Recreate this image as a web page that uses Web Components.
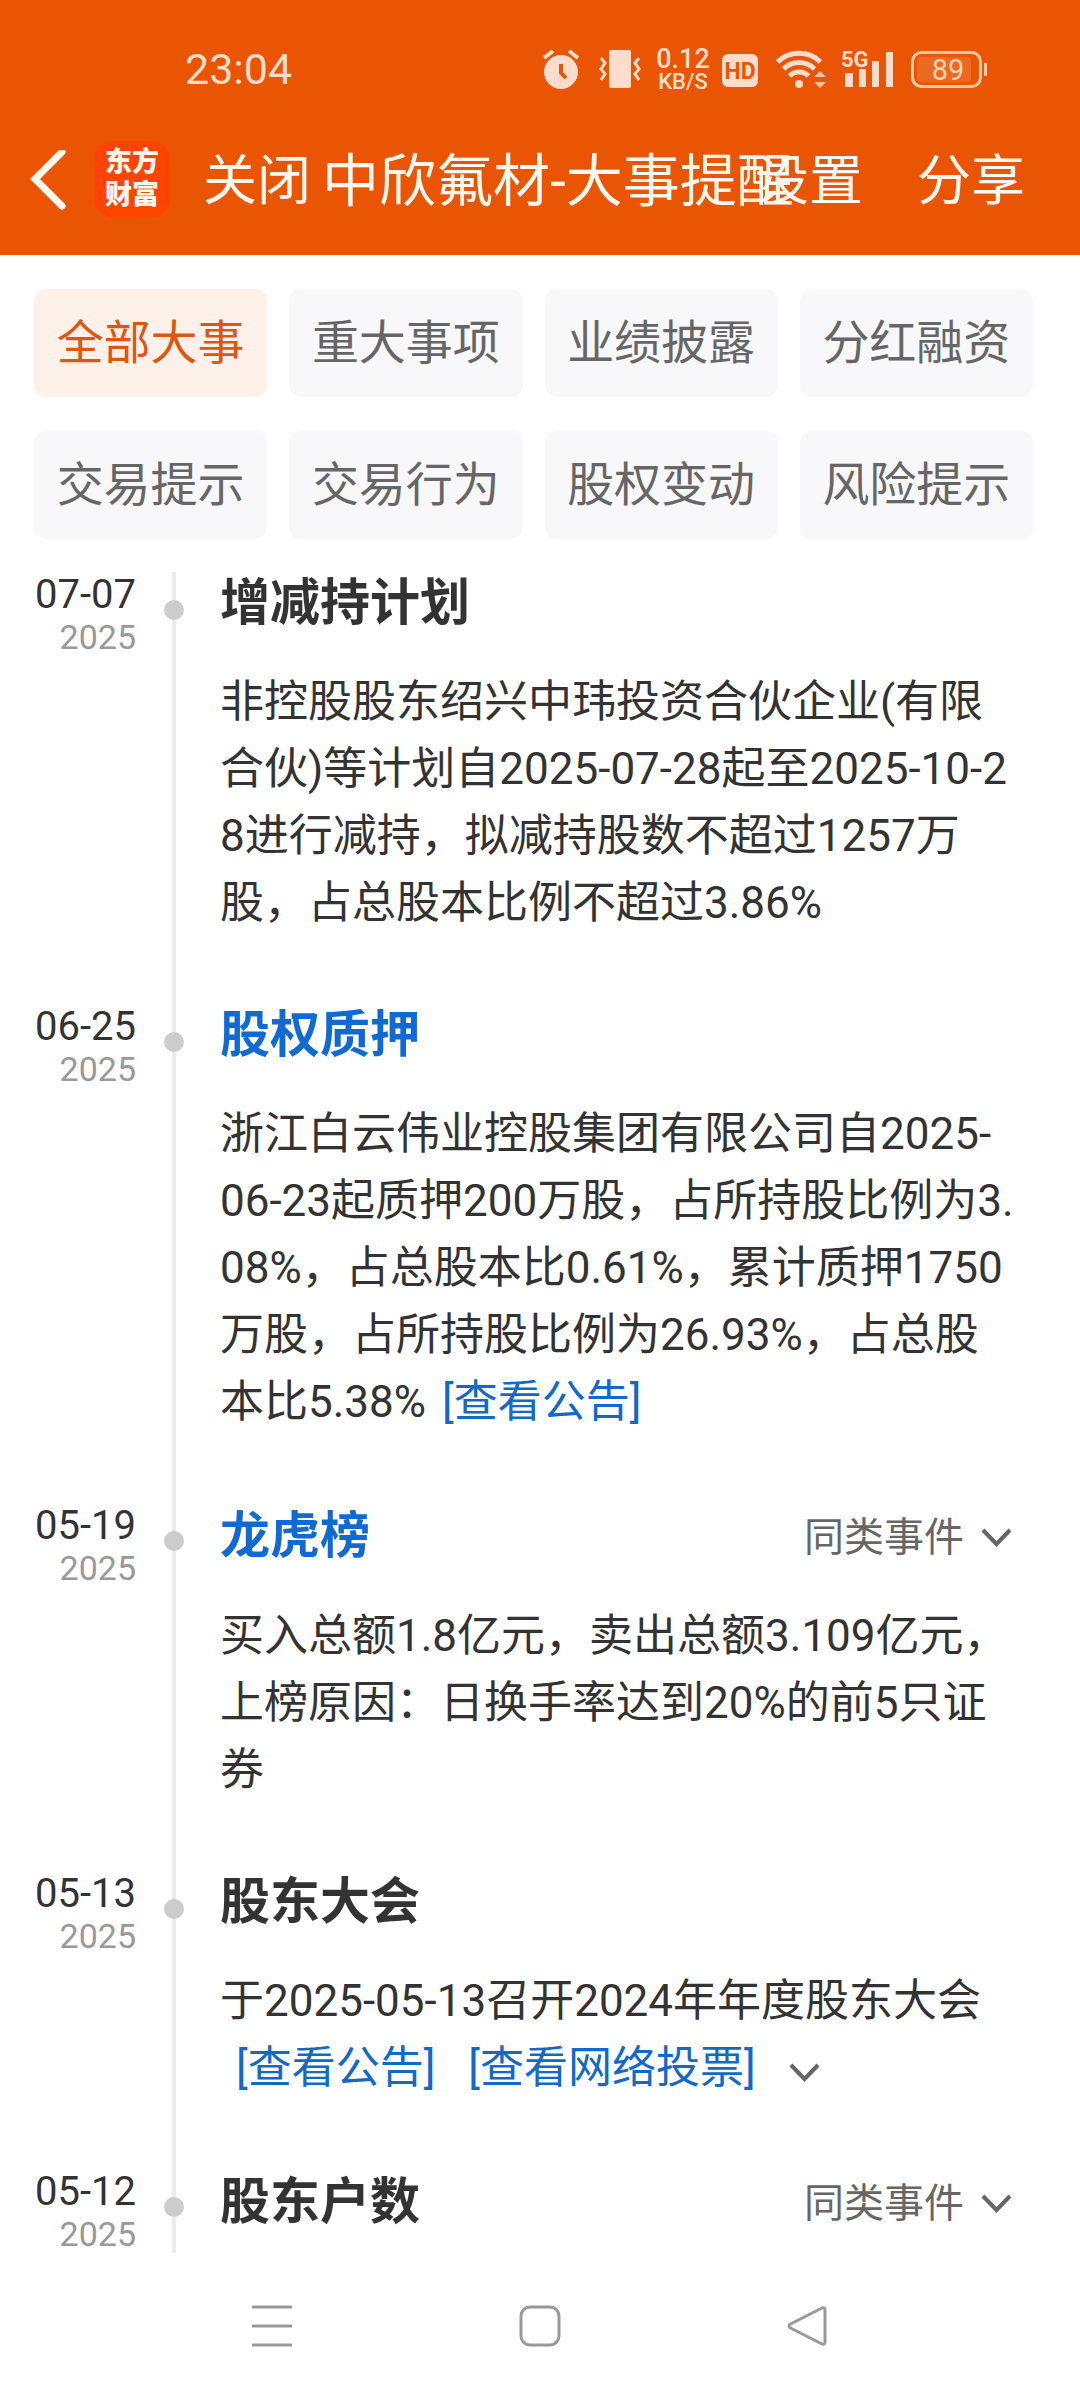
<!DOCTYPE html>
<html lang="zh-CN">
<head>
<meta charset="utf-8">
<meta name="viewport" content="width=device-width, initial-scale=1">
<title>中欣氟材-大事提醒</title>
<style>
  body { margin: 0; background: #fff; font-family: Roboto, "Noto Sans CJK SC", sans-serif; color: #333; }
</style>
</head>
<body>
<event-app></event-app>

<script>
const BASE = `
  *, *::before, *::after { box-sizing: border-box; }
  button { font: inherit; color: inherit; background: none; border: 0; padding: 0; margin: 0; cursor: pointer; }
  a { color: inherit; text-decoration: none; }
  svg { display: block; flex: none; }
`;

class BaseElement extends HTMLElement {
  constructor() {
    super();
    this.attachShadow({ mode: 'open' });
  }
  connectedCallback() {
    this.shadowRoot.innerHTML = `<style>${BASE}${this.styles()}</style>${this.markup()}`;
  }
}

class StatusBar extends BaseElement {
  styles() {
    return `
      :host { display: flex; align-items: center; justify-content: space-between; height: 105px; padding: 33px 93px 0 185px; color: #ffdccb; }
      .time { font-size: 43px; line-height: 48px; }
      .icons { display: flex; align-items: center; }
      .speed { display: flex; flex-direction: column; align-items: center; width: 52px; margin: 0 13px 0 16px; padding-top: 2px; font-weight: 500; }
      .speed b { font-weight: 500; font-size: 27px; line-height: 24px; }
      .speed span { font-size: 22px; line-height: 22px; }
      text { font-family: Roboto, sans-serif; }
    `;
  }
  markup() {
    return `
      <span class="time">23:04</span>
      <div class="icons">
        <svg width="36" height="40" viewBox="0 0 36 40" fill="none" aria-label="闹钟">
          <circle cx="18" cy="23" r="17" fill="#ffdccb"/>
          <path d="M1 9 10 2M26 2l9 7" stroke="#ffdccb" stroke-width="4"/>
          <path d="M18 15v9l5 5" stroke="#ea5504" stroke-width="4"/>
        </svg>
        <svg style="margin-left:20px" width="42" height="40" viewBox="0 0 42 40" fill="none" aria-label="振动">
          <rect x="10" y="1" width="22" height="38" rx="2" fill="#ffdccb"/>
          <path d="M2 9l4 5-4 6 4 5-4 6M40 9l-4 5 4 6-4 5 4 6" stroke="#ffdccb" stroke-width="3"/>
        </svg>
        <div class="speed"><b>0.12</b><span>KB/S</span></div>
        <svg width="36" height="40" viewBox="0 0 36 40" aria-label="HD">
          <rect y="5" width="36" height="33" rx="6" fill="#ffdccb"/>
          <text x="18" y="30" text-anchor="middle" font-size="23" font-weight="700" fill="#ea5504">HD</text>
        </svg>
        <svg style="margin-left:18px" width="50" height="40" viewBox="0 0 50 40" fill="none" aria-label="WLAN">
          <path d="M1.500 13a31 31 0 0 1 43 0M7.500 20a22 22 0 0 1 31 0M13.500 27a13.500 13.500 0 0 1 19 0" stroke="#ffdccb" stroke-width="5"/>
          <circle cx="23" cy="35" r="4" fill="#ffdccb"/>
          <path d="M38 28l6-6 6 6zM38 33h12l-6 6z" fill="#ffdccb" opacity=".8"/>
        </svg>
        <svg style="margin-left:15px;overflow:visible" width="53" height="40" viewBox="0 0 53 40" fill="#ffdccb" aria-label="5G 信号">
          <text x="0" y="18" font-size="22" font-weight="700">5G</text>
          <rect x="4" y="24" width="8" height="14" rx="1"/>
          <rect x="18" y="20" width="7" height="18" rx="1"/>
          <rect x="31" y="12" width="7" height="26" rx="1"/>
          <rect x="45" y="3" width="7" height="35" rx="1"/>
        </svg>
        <svg style="margin-left:17px" width="76" height="40" viewBox="0 0 76 40" fill="none" aria-label="电量 89%">
          <rect x="1.500" y="3.500" width="68" height="34" rx="9" stroke="#ffc9a8" stroke-width="3"/>
          <rect x="6" y="8" width="54" height="25" rx="4" fill="#fff" opacity=".12"/>
          <path d="M74.500 14v13" stroke="#ffc9a8" stroke-width="3"/>
          <text x="37" y="31" text-anchor="middle" font-size="29" fill="#ffd2b8">89</text>
        </svg>
      </div>
    `;
  }
}

class NavHeader extends BaseElement {
  styles() {
    return `
      :host { display: flex; align-items: center; height: 150px; padding: 4px 55px 0 30px; color: #fff8f0; white-space: nowrap; }
      .logo { display: flex; flex-direction: column; align-items: center; justify-content: center; flex: none; width: 76px; height: 76px; margin: 0 33px 6px 28px; border-radius: 17px; background: #ff4400; font-size: 27px; line-height: 33px; font-weight: 900; }
      .text { font-size: 54px; line-height: 76px; }
      h1 { flex: 1; min-width: 0; margin: 0 0 0 11px; font-size: 57px; line-height: 76px; font-weight: 400; }
      .share { margin-left: 54px; }
    `;
  }
  markup() {
    return `
      <button aria-label="返回"><svg width="36" height="64" viewBox="0 0 36 64" fill="none"><path d="M32 2 5 29l27 27" stroke="#fff8f0" stroke-width="7" stroke-linecap="round"/></svg></button>
      <div class="logo"><span>东方</span><span>财富</span></div>
      <button class="text">关闭</button>
      <h1>中欣氟材-大事提醒</h1>
      <button class="text">设置</button>
      <button class="text share">分享</button>
    `;
  }
}

class FilterChip extends BaseElement {
  styles() {
    return `
      :host { display: block; }
      button { display: block; width: 100%; height: 108px; border-radius: 12px; background: #f8f8fb; color: #666; font-size: 47px; line-height: 68px; white-space: nowrap; }
      :host([selected]) button { background: #fdf1ea; color: #dd5710; }
    `;
  }
  markup() {
    return `<button aria-pressed="${this.hasAttribute('selected')}"><slot></slot></button>`;
  }
}

class ChevronDown extends BaseElement {
  styles() { return `:host { display: inline-block; color: #666; }`; }
  markup() {
    return `<svg width="31" height="20" viewBox="0 0 31 20" fill="none"><path d="M2 2l13.500 14L29 2" stroke="currentColor" stroke-width="4"/></svg>`;
  }
}

class NoticeLink extends BaseElement {
  styles() {
    return `
      :host { display: inline-block; margin: 0 17px 0 16px; color: #1269c7; }
    `;
  }
  markup() { return `<a href="#"><slot></slot></a>`; }
}

class TimelineEvent extends BaseElement {
  styles() {
    return `
      :host { display: grid; grid-template-columns: 102px 20px minmax(0, 1fr); padding: 0 65px 0 34px; }
      time { display: block; text-align: right; }
      .day { display: block; font-size: 40px; line-height: 45px; }
      .year { display: block; font-size: 34px; line-height: 40px; color: #999; }
      .rail { display: grid; justify-items: center; margin-left: 28px; width: 20px; }
      .rail::before { content: ""; grid-area: 1 / 1; width: 4px; background: #ebebeb; }
      .rail i { grid-area: 1 / 1; width: 20px; height: 20px; margin-top: 28px; border-radius: 50%; background: #ccc; }
      article { margin-left: 64px; padding-bottom: 67px; }
      header { display: flex; align-items: center; justify-content: space-between; padding-right: 3px; }
      h2 { margin: 0; font-size: 50px; line-height: 62px; font-weight: 700; }
      h2 a { color: #116ad1; }
      header button { display: flex; align-items: center; gap: 17px; padding-top: 4px; font-size: 40px; line-height: 61px; color: #666; }
      .body { margin-top: 35px; font-size: 44px; line-height: 67px; word-break: break-all; }
    `;
  }
  markup() {
    const [year, ...rest] = this.getAttribute('date').split('-');
    const heading = this.getAttribute('heading');
    return `
      <time datetime="${this.getAttribute('date')}"><span class="day">${rest.join('-')}</span><span class="year">${year}</span></time>
      <div class="rail"><i></i></div>
      <article>
        <header>
          <h2>${this.hasAttribute('linked') ? `<a href="#">${heading}</a>` : heading}</h2>
          ${this.hasAttribute('similar') ? '<button>同类事件<chevron-down></chevron-down></button>' : ''}
        </header>
        <div class="body"><slot></slot></div>
      </article>
    `;
  }
}

class SystemNav extends BaseElement {
  styles() {
    return `
      :host { display: flex; flex: none; align-items: center; justify-content: center; gap: 226px; height: 147px; padding-bottom: 2px; background: #fff; }
    `;
  }
  markup() {
    return `
      <button aria-label="最近任务"><svg width="42" height="42" viewBox="0 0 42 42"><path d="M1 2h40M1 21h40M1 40h40" stroke="#999" stroke-width="3"/></svg></button>
      <button aria-label="主页"><svg width="42" height="42" viewBox="0 0 42 42" fill="none"><rect x="2" y="2" width="38" height="38" rx="9" stroke="#999" stroke-width="3"/></svg></button>
      <button aria-label="返回"><svg width="42" height="42" viewBox="0 0 42 42" fill="none"><path d="M35 3 3.500 19q-3 2 0 4L35 39q3 1 3-2V5q0-3-3-2z" stroke="#999" stroke-width="3" stroke-linejoin="round"/></svg></button>
    `;
  }
}

class EventApp extends BaseElement {
  styles() {
    return `
      :host { display: flex; flex-direction: column; height: 100vh; overflow: hidden; }
      .top { flex: none; background: #ea5504; }
      nav { display: grid; flex: none; grid-template-columns: repeat(4, 1fr); gap: 34px 22px; padding: 34px 47px 33px 34px; }
      main { flex: 1; min-height: 0; overflow: hidden; }
      .more { margin-left: 16px; }
    `;
  }
  markup() {
    const chips = ['全部大事', '重大事项', '业绩披露', '分红融资', '交易提示', '交易行为', '股权变动', '风险提示'];
    return `
      <div class="top"><status-bar></status-bar><nav-header></nav-header></div>
      <nav>${chips.map((c, i) => `<filter-chip${i ? '' : ' selected'}>${c}</filter-chip>`).join('')}</nav>
      <main>
        <timeline-event date="2025-07-07" heading="增减持计划">非控股股东绍兴中玮投资合伙企业(有限合伙)等计划自2025-07-28起至2025-10-28进行减持，拟减持股数不超过1257万股，占总股本比例不超过3.86%</timeline-event>
        <timeline-event date="2025-06-25" heading="股权质押" linked>浙江白云伟业控股集团有限公司自2025-06-23起质押200万股，占所持股比例为3.08%，占总股本比0.61%，累计质押1750万股，占所持股比例为26.93%，占总股本比5.38%<notice-link>[查看公告]</notice-link></timeline-event>
        <timeline-event date="2025-05-19" heading="龙虎榜" linked similar>买入总额1.8亿元，卖出总额3.109亿元，上榜原因：日换手率达到20%的前5只证券</timeline-event>
        <timeline-event date="2025-05-13" heading="股东大会">于2025-05-13召开2024年年度股东大会<notice-link>[查看公告]</notice-link><notice-link>[查看网络投票]</notice-link><button class="more" aria-label="展开"><chevron-down></chevron-down></button></timeline-event>
        <timeline-event date="2025-05-12" heading="股东户数" similar></timeline-event>
      </main>
      <system-nav></system-nav>
    `;
  }
}

customElements.define('chevron-down', ChevronDown);
customElements.define('notice-link', NoticeLink);
customElements.define('status-bar', StatusBar);
customElements.define('nav-header', NavHeader);
customElements.define('filter-chip', FilterChip);
customElements.define('timeline-event', TimelineEvent);
customElements.define('system-nav', SystemNav);
customElements.define('event-app', EventApp);
</script>
</body>
</html>
